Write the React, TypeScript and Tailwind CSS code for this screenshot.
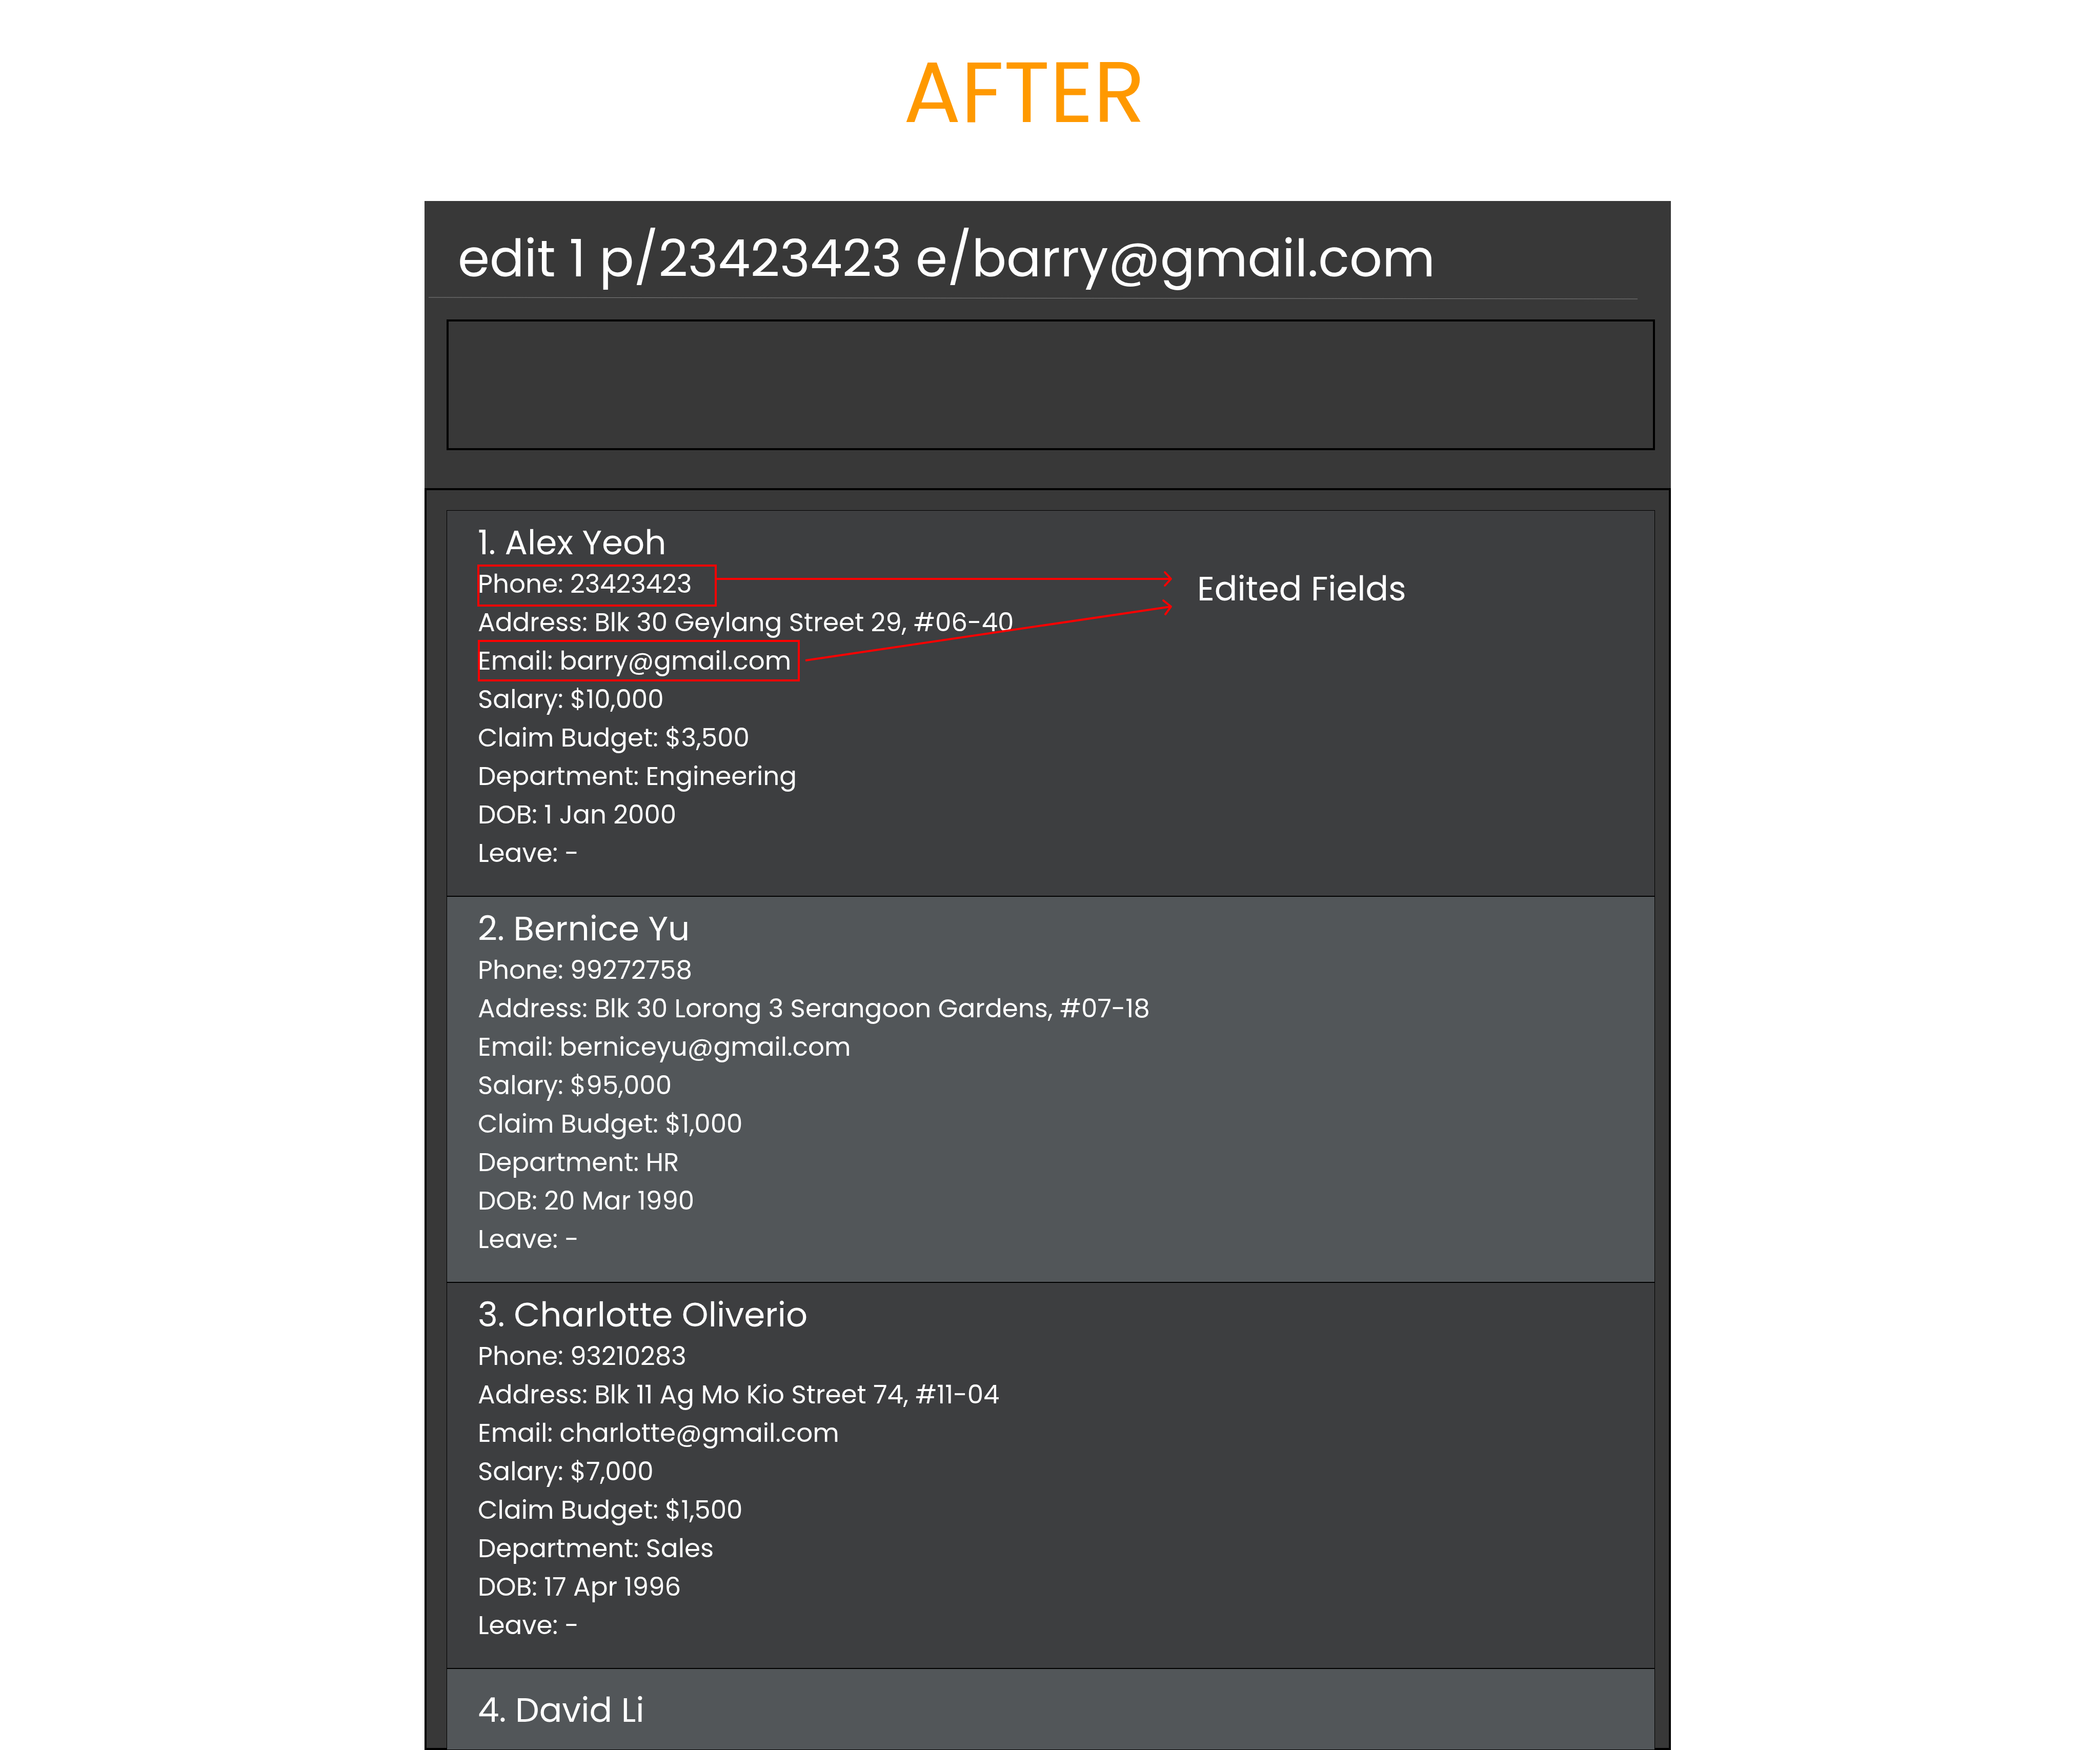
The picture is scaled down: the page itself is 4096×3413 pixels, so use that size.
import React from "react";

type Person = { name: string; fields: [string, string][] };

const people: Person[] = [
  {
    name: "1. Alex Yeoh",
    fields: [
      ["Phone", "23423423"],
      ["Address", "Blk 30 Geylang Street 29, #06-40"],
      ["Email", "barry@gmail.com"],
      ["Salary", "$10,000"],
      ["Claim Budget", "$3,500"],
      ["Department", "Engineering"],
      ["DOB", "1 Jan 2000"],
      ["Leave", "-"],
    ],
  },
  {
    name: "2. Bernice Yu",
    fields: [
      ["Phone", "99272758"],
      ["Address", "Blk 30 Lorong 3 Serangoon Gardens, #07-18"],
      ["Email", "berniceyu@gmail.com"],
      ["Salary", "$95,000"],
      ["Claim Budget", "$1,000"],
      ["Department", "HR"],
      ["DOB", "20 Mar 1990"],
      ["Leave", "-"],
    ],
  },
  {
    name: "3. Charlotte Oliverio",
    fields: [
      ["Phone", "93210283"],
      ["Address", "Blk 11 Ag Mo Kio Street 74, #11-04"],
      ["Email", "charlotte@gmail.com"],
      ["Salary", "$7,000"],
      ["Claim Budget", "$1,500"],
      ["Department", "Sales"],
      ["DOB", "17 Apr 1996"],
      ["Leave", "-"],
    ],
  },
];

/* Red outlines round the edited rows, with arrows to their caption. */
function EditedFields() {
  return (
    <>
      <svg
        className="absolute left-0 top-0 h-[400px] w-[1440px] fill-none stroke-[#ff0000] stroke-4"
        viewBox="0 0 1440 400"
        aria-hidden="true"
      >
        <rect x="61" y="107" width="463" height="78" />
        <rect x="62" y="254" width="624" height="77" />
        <path d="M526 133H1412" />
        <path d="M1400 120L1412 133L1400 146" strokeLinecap="round" strokeLinejoin="round" />
        <path d="M699 292L1412 187" />
        <path d="M1397 175L1412 187L1401 202" strokeLinecap="round" strokeLinejoin="round" />
      </svg>
      <p className="absolute left-[1463px] top-[110px] whitespace-nowrap text-[66px] leading-[84px]">Edited Fields</p>
    </>
  );
}

function PersonCard({ person, edited }: { person: Person; edited: boolean }) {
  return (
    <li className="relative border border-black pb-[46px] pl-[60px] pt-5 odd:bg-[#3d3e40] even:bg-[#525659]">
      <h2 className="text-[66px] leading-[85px]">{person.name}</h2>
      <ul>
        {person.fields.map(([label, value]) => (
          <li key={label} className="text-[50px] leading-[75px]">
            {label}: {value}
          </li>
        ))}
      </ul>
      {edited && <EditedFields />}
    </li>
  );
}

export default function App() {
  return (
    <main className="bg-white font-['Poppins','Inter',sans-serif] text-white">
      <h1 className="pb-[88px] pr-[100px] pt-14 text-center text-[166px] leading-[248px] text-[#ff9900]">AFTER</h1>
      <div className="grid grid-cols-[828fr_2431fr_837fr]">
        <section className="col-start-2 bg-[#383838]">
          <input
            aria-label="Command"
            defaultValue="edit 1 p/23423423 e/barry@gmail.com"
            className="mt-[37px] block h-[150px] w-full bg-transparent pl-[65px] text-[100px] outline-none"
          />
          <svg className="mb-[39px] ml-2 block h-[5px] w-[97%]" aria-hidden="true">
            <line x1="0" y1="1" x2="100%" y2="4" stroke="#7f7f7f" strokeWidth="1" />
          </svg>
          <div role="status" aria-label="Result" className="ml-[43px] mr-[31px] h-[255px] border-4 border-black" />
          <div className="mt-[74px] border-4 border-black pl-[39px] pr-[27px] pt-[39px]">
            <ol>
              {people.map((person, i) => (
                <PersonCard key={person.name} person={person} edited={i === 0} />
              ))}
              <li className="relative -mb-1 border border-black bg-[#525659] pb-[35px] pl-[60px] pt-[38px]">
                <h2 className="text-[66px] leading-[84px]">4. David Li</h2>
              </li>
            </ol>
          </div>
        </section>
      </div>
    </main>
  );
}
